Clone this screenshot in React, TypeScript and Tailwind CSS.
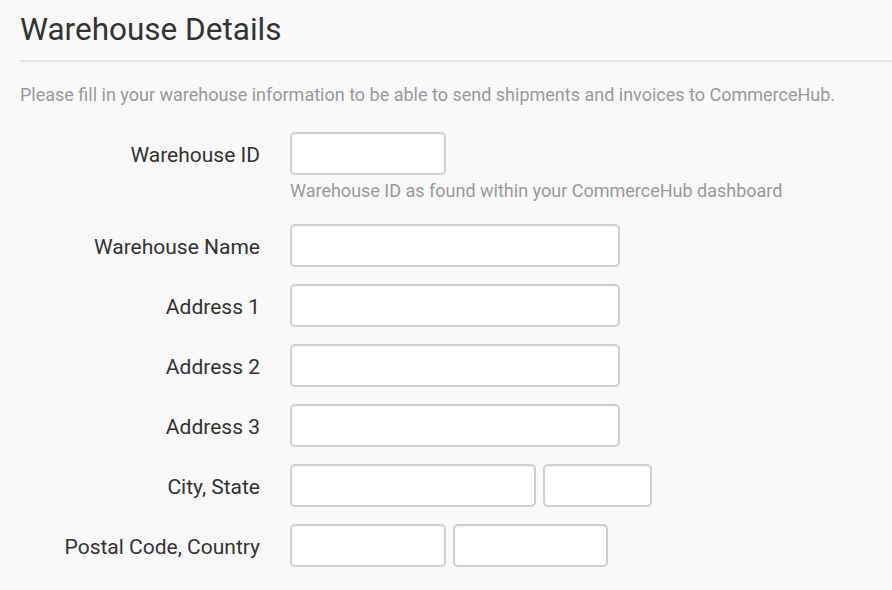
const field = "h-[43px] rounded-[5px] border-2 border-[#cfcfcf] bg-white shadow-[inset_0_1px_2px_rgba(0,0,0,0.06)] outline-none";

function Row({ label, children }: { label: string; children: React.ReactNode }) {
  return (
    <div className="flex items-start">
      <label className="h-[43px] w-[240px] shrink-0 text-right text-[21px] leading-[47px] text-[#333]">{label}</label>
      <div className="ml-[30px] flex flex-col">{children}</div>
    </div>
  );
}

export default function App() {
  return (
    <div className="min-h-[590px] w-[892px] bg-[#f9f9f9] font-['Roboto',sans-serif] pl-[20px]">
      <h1 className="pt-[10px] text-[31.5px] leading-[40px] text-[#333]">Warehouse Details</h1>
      <div className="mt-[10px] h-[2px] bg-[#e3e3e3]" />
      <p className="mt-[22px] text-[18px] leading-[22px] text-[#999]">
        Please fill in your warehouse information to be able to send shipments and invoices to CommerceHub.
      </p>
      <div className="mt-[26px] flex flex-col gap-[17px]">
        <Row label="Warehouse ID">
          <input className={`${field} w-[156px]`} />
          <span className="my-[4px] text-[18px] leading-[24px] text-[#999]">Warehouse ID as found within your CommerceHub dashboard</span>
        </Row>
        <Row label="Warehouse Name">
          <input className={`${field} w-[330px]`} />
        </Row>
        <Row label="Address 1">
          <input className={`${field} w-[330px]`} />
        </Row>
        <Row label="Address 2">
          <input className={`${field} w-[330px]`} />
        </Row>
        <Row label="Address 3">
          <input className={`${field} w-[330px]`} />
        </Row>
        <Row label="City, State">
          <div className="flex gap-[7px]">
            <input className={`${field} w-[246px]`} />
            <input className={`${field} w-[109px]`} />
          </div>
        </Row>
        <Row label="Postal Code, Country">
          <div className="flex gap-[7px]">
            <input className={`${field} w-[156px]`} />
            <input className={`${field} w-[155px]`} />
          </div>
        </Row>
      </div>
    </div>
  );
}
